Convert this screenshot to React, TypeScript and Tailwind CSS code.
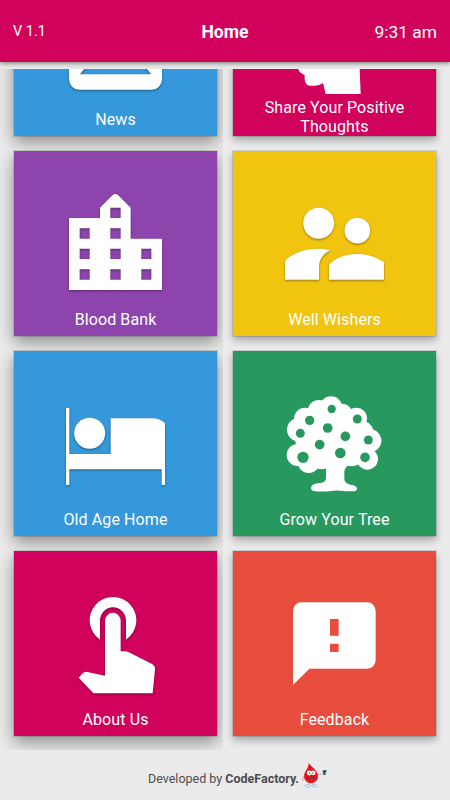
import type { ReactNode } from 'react';
import clsx from 'clsx';

type Tile = {
  label: ReactNode;
  color: string;
  icon: ReactNode;
  flat?: boolean;
  tall?: boolean;
};

const NewsIcon = () => (
  <path
    fillRule="evenodd"
    d="M238 170H455a31 31 0 0 1 31 31V418a31 31 0 0 1 -31 31H238a31 31 0 0 1 -31 -31V201a31 31 0 0 1 31 -31ZM294 333L240 403H453L385 310L332 380Z"
  />
);

const ThoughtsIcon = () => (
  <path d="M404 387L407 462H302L294 429Q286 435 272 437Q254 439 246 434Q238 427 239 415V406Q232 402 225 397Q219 392 221 387L230 340Q210 330 232 300Q240 210 320 205Q400 210 405 290Z" />
);

const CityIcon = () => (
  <path
    fillRule="evenodd"
    d="M207 234H300V203L338 165Q346 159 354 165L392 203V296H486V450H207ZM331 203V234H362V203ZM239 265V296H269V265ZM331 265V296H362V265ZM239 326V357H269V326ZM331 326V357H362V326ZM424 326V357H454V326ZM239 388V419H269V388ZM331 388V419H362V388ZM424 388V419H454V388Z"
  />
);

const PeopleIcon = () => (
  <>
    <circle cx="281" cy="250" r="46.5" />
    <circle cx="397" cy="272" r="38.5" />
    <path d="M180 419V362C206 338 250 318 316 330C294 342 282 358 282 382V419Z" />
    <path d="M312 419V374C333 353 360 342 397 342C428 342 455 352 477 367V419Z" />
  </>
);

const BedIcon = () => (
  <>
    <circle cx="269" cy="280" r="46.5" />
    <path d="M198 204H208V342H332V235H456Q480 235 495 250V435H485V388H208V435H198Z" />
  </>
);

const fruits = [
  [320, 207, 12.5],
  [254, 241, 14],
  [397, 237, 13.5],
  [226, 280, 13.5],
  [308, 264, 14.5],
  [361, 289, 14.5],
  [430, 300, 13.5],
  [284, 314, 14.5],
  [346, 339, 16],
  [234, 352, 17],
  [420, 352, 14.5],
];

const leaves = [
  [318, 203, 34],
  [282, 214, 34],
  [240, 236, 33],
  [221, 269, 35],
  [218, 345, 33],
  [251, 366, 33],
  [290, 350, 38],
  [350, 224, 33],
  [394, 235, 32],
  [412, 278, 34],
  [435, 302, 34],
  [427, 357, 32],
  [380, 345, 34],
];

const TreeIcon = () => (
  <>
    <ellipse cx="322" cy="295" rx="112" ry="80" />
    {leaves.map(([x, y, r]) => (
      <circle key={`${x}-${y}`} cx={x} cy={y} r={r} />
    ))}
    <path d="M303 350V412Q303 428 286 429Q258 430 258 444Q259 454 272 454Q290 456 325 452Q345 451 362 454H388Q396 453 396 445Q393 435 376 434Q358 431 358 415V396Q358 384 370 376V350Z" />
    <g className="fill-[#27995f]">
      {fruits.map(([x, y, r]) => (
        <circle key={`${x}-${y}`} cx={x} cy={y} r={r} />
      ))}
    </g>
  </>
);

const TouchIcon = () => (
  <>
    <path d="M300 299V241a39 39 0 0 1 78 0V299A70 70 0 1 0 300 299Z" />
    <path d="M315 407V242a23.5 23.5 0 0 1 47 0V334H376Q383 334 391 339L456 372Q466 378 465 388L458 460H280L236 413L248 400Q254 394 262 396Z" />
  </>
);

const FeedbackIcon = () => (
  <path
    fillRule="evenodd"
    d="M229 187H427a25 25 0 0 1 25 25V361a25 25 0 0 1 -25 25H253L204 435V212a25 25 0 0 1 25 -25ZM315 237V287H341V237ZM315 311V336H341V311Z"
  />
);

const tiles: Tile[] = [
  { label: 'News', color: 'bg-[#3498db]', icon: <NewsIcon /> },
  {
    label: (
      <>
        Share Your Positive
        <br />
        Thoughts
      </>
    ),
    color: 'bg-[#d0025b]',
    icon: <ThoughtsIcon />,
    flat: true,
    tall: true,
  },
  { label: 'Blood Bank', color: 'bg-[#8e44ad]', icon: <CityIcon /> },
  { label: 'Well Wishers', color: 'bg-[#f1c40f]', icon: <PeopleIcon /> },
  { label: 'Old Age Home', color: 'bg-[#3498db]', icon: <BedIcon /> },
  { label: 'Grow Your Tree', color: 'bg-[#27995f]', icon: <TreeIcon />, flat: true },
  { label: 'About Us', color: 'bg-[#d0025b]', icon: <TouchIcon /> },
  { label: 'Feedback', color: 'bg-[#e74c3c]', icon: <FeedbackIcon />, flat: true },
];

function MenuTile({ tile, left }: { tile: Tile; left: boolean }) {
  return (
    <div className={clsx('h-[200px] overflow-hidden pt-px', left ? 'pl-3.5' : 'pl-2.5')}>
      <button
        className={clsx(
          'flex h-[185px] w-[203px] flex-col items-center pt-[34px] text-white',
          tile.color,
          left
            ? 'shadow-[0_0_0_1px_rgba(0,0,0,0.12),0_6px_16px_rgba(0,0,0,0.42)]'
            : 'shadow-[0_0_0_1px_rgba(0,0,0,0.1),0_4px_8px_rgba(0,0,0,0.32)]'
        )}
      >
        <svg
          viewBox={left ? '165 135 363 363' : '147 135 363 363'}
          className={clsx(
            'size-[121px] shrink-0 fill-white',
            !tile.flat && 'drop-shadow-[0_1px_1px_rgba(0,0,0,0.4)]'
          )}
        >
          {tile.icon}
        </svg>
        <span
          className={clsx(
            'relative text-center text-[16px] leading-[19px] tracking-[0.1px]',
            tile.tall ? '-mt-2' : 'mt-1'
          )}
        >
          {tile.label}
        </span>
      </button>
    </div>
  );
}

const DropMascot = () => (
  <svg viewBox="0 0 26 26" className="ml-[3px] -mt-[8px] h-[26px] w-[26px]">
    <path d="M6.5 0.5C8.5 4.5 16 8 16 14.5A7 6.8 0 0 1 2 14.5C2 9 7.5 6 6.5 0.5Z" fill="#e3171b" />
    <path d="M2 14Q-0.5 16 1 19M16 12.5L20 12" stroke="#d98a8c" strokeWidth="0.8" fill="none" />
    <circle cx="7.2" cy="11" r="2.4" fill="#fff" />
    <circle cx="11.2" cy="10.8" r="2.4" fill="#fff" />
    <circle cx="7.8" cy="11.2" r="0.7" fill="#333" />
    <circle cx="10.8" cy="11.1" r="0.7" fill="#333" />
    <path d="M5.5 15.6Q9 17.5 12.3 15.8Q10 20 5.5 15.6Z" fill="#fff" stroke="#5b1420" strokeWidth="0.8" />
    <path d="M7 21V23M11 21V23" stroke="#999" strokeWidth="0.8" />
    <ellipse cx="5.4" cy="23.8" rx="2.6" ry="1.1" fill="#fff" stroke="#8cb6d1" strokeWidth="0.8" />
    <ellipse cx="12.4" cy="23.8" rx="2.6" ry="1.1" fill="#fff" stroke="#8cb6d1" strokeWidth="0.8" />
    <path d="M21 8.3H24.5V10H23.5V13H21.3V11L20.5 10Z" fill="#2b4f63" />
  </svg>
);

export default function App() {
  return (
    <div className="flex h-[800px] w-[450px] flex-col overflow-hidden bg-[#ebebeb] font-['Roboto',sans-serif]">
      <header className="grid h-[62px] shrink-0 grid-cols-3 items-center bg-[#d0025b] px-[13px] pt-0.5 text-white shadow-[0_1px_5px_rgba(0,0,0,0.5)]">
        <span className="text-[14.5px]">V 1.1</span>
        <h1 className="text-center text-[17.6px] font-bold">Home</h1>
        <span className="text-right text-[17.4px]">9:31 am</span>
      </header>

      <main className="mt-[7px] flex h-[681px] flex-col justify-end overflow-hidden">
        <div className="grid shrink-0 grid-cols-[223px_227px]">
          {tiles.map((tile, i) => (
            <MenuTile key={i} tile={tile} left={i % 2 === 0} />
          ))}
        </div>
      </main>

      <footer className="flex h-[50px] shrink-0 items-center pt-2 pl-[148px] text-[12.5px] text-[#4d4d4d]">
        <span>
          Developed by <b>CodeFactory.</b>
        </span>
        <DropMascot />
      </footer>
    </div>
  );
}
